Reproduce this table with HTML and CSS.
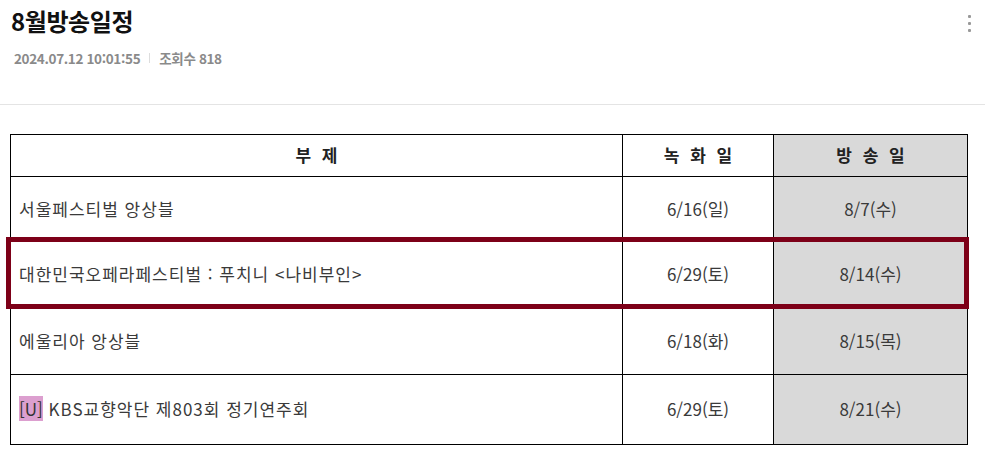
FILE: index.html
```html
<!DOCTYPE html>
<html lang="ko">
<head>
<meta charset="utf-8">
<link rel="stylesheet" href="styles.css">
</head>
<body>
<header class="post-head">
  <div class="title-row">
    <h1 class="title">8월방송일정</h1>
    <div class="more"><span></span><span></span><span></span></div>
  </div>
  <div class="meta"><span>2024.07.12 10:01:55</span><i class="sep"></i><span>조회수 818</span></div>
</header>
<main class="content">
  <div class="table-wrap">
    <table class="sched">
      <colgroup><col class="c1"><col class="c2"><col class="c3"></colgroup>
      <thead>
        <tr class="r-head"><th>부 제</th><th>녹 화 일</th><th class="air">방 송 일</th></tr>
      </thead>
      <tbody>
        <tr class="r1"><td class="sub">서울페스티벌 앙상블</td><td>6/16(일)</td><td class="air">8/7(수)</td></tr>
        <tr class="r2"><td class="sub">대한민국오페라페스티벌 : 푸치니 &lt;나비부인&gt;</td><td>6/29(토)</td><td class="air">8/14(수)</td></tr>
        <tr class="r3"><td class="sub">에울리아 앙상블</td><td>6/18(화)</td><td class="air">8/15(목)</td></tr>
        <tr class="r4"><td class="sub"><mark class="tag">[U]</mark> KBS교향악단 제803회 정기연주회</td><td>6/29(토)</td><td class="air">8/21(수)</td></tr>
      </tbody>
    </table>
    <div class="highlight"></div>
  </div>
</main>
</body>
</html>
```
FILE: styles.css
```css
* { box-sizing: border-box; }
html, body { margin: 0; padding: 0; background: #fff; }
body {
  font-family: "Noto Sans CJK KR", "Noto Sans", sans-serif;
  color: #333;
  width: 985px;
}
.post-head {
  padding: 4px 11px 0 11px;
  height: 105px;
  border-bottom: 1px solid #e4e4e4;
}
.title-row {
  display: flex;
  justify-content: space-between;
  align-items: flex-start;
}
.title {
  margin: 0;
  font-size: 24px;
  line-height: 34px;
  font-weight: 700;
  color: #111;
  letter-spacing: -0.4px;
}
.more {
  display: flex;
  flex-direction: column;
  gap: 4px;
  padding-top: 11px;
  margin-right: 3px;
}
.more span {
  width: 3px;
  height: 3px;
  background: #999;
  border-radius: 1px;
}
.meta {
  margin-top: 11px;
  padding-left: 3px;
  display: flex;
  align-items: center;
  font-size: 13.5px;
  font-weight: 700;
  color: #8a8a8a;
  letter-spacing: -0.35px;
  line-height: 18px;
}
.sep {
  display: inline-block;
  width: 1px;
  height: 10px;
  background: #ddd;
  margin: 0 9px;
}
.content { padding: 29px 0 0 10px; }
.table-wrap { position: relative; width: 957px; }
.sched {
  border-collapse: collapse;
  width: 957px;
  table-layout: fixed;
  font-size: 17px;
  font-weight: 400;
}
.c1 { width: 612px; }
.c2 { width: 151px; }
.c3 { width: 194px; }
.sched th, .sched td {
  border: 1px solid #000;
  text-align: center;
  vertical-align: middle;
  padding: 0 8px 2px;
  color: #3a3a3a;
}
.sched th { font-weight: 700; color: #222; letter-spacing: 3px; padding-left: 11px; }
.sched td.sub { text-align: left; letter-spacing: 1px; }
.sched .air { background: #d9d9d9; }
.r-head { height: 42px; }
.r1 { height: 65px; }
.r2 { height: 66px; }
.r3 { height: 67px; }
.r4 { height: 70px; }
.tag { background: #dc9fcf; color: #333; padding: 0; letter-spacing: 0; }
.highlight {
  position: absolute;
  left: -4px;
  top: 103px;
  width: 963px;
  height: 72px;
  border: 5px solid #7d0018;
  pointer-events: none;
}
```
